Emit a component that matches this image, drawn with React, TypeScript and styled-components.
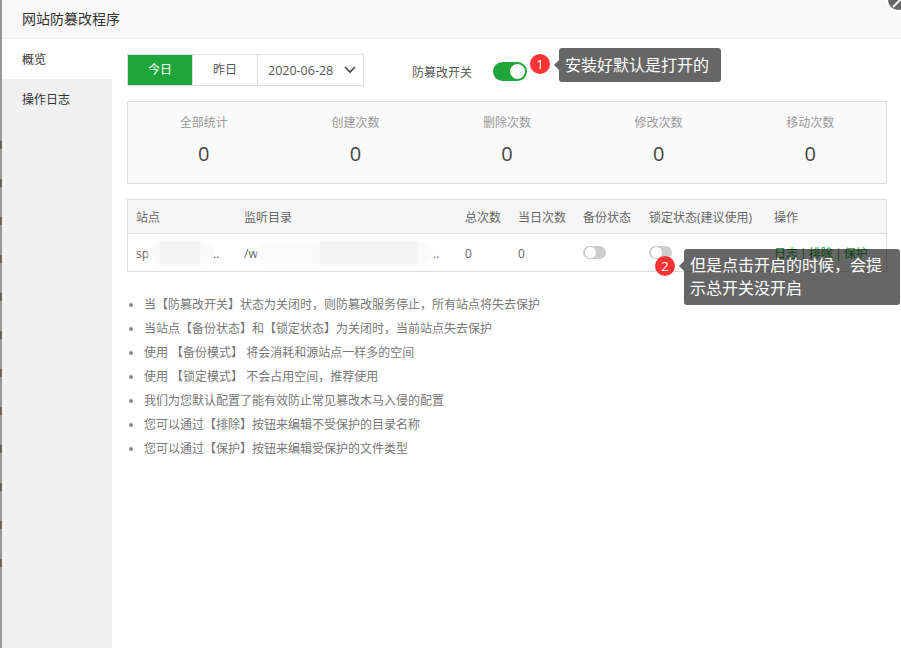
import React from 'react';
import styled, { createGlobalStyle } from 'styled-components';

const GlobalStyle = createGlobalStyle`
  html, body {
    margin: 0;
    padding: 0;
    height: 100%;
    overflow: hidden;
    background: #fff;
  }

  body {
    font-family: "Open Sans", "Noto Sans CJK SC", sans-serif;
    font-size: 12px;
    color: #666;
  }

  #root {
    height: 100%;
  }
`;

const Page = styled.div`
  position: relative;
  display: flex;
  width: 901px;
  height: 648px;
  overflow: hidden;
`;

const Backdrop = styled.div`
  flex: 0 0 2px;
  background:
    repeating-linear-gradient(#999 0 30px, #6d6459 30px 38px) 0 111px / 2px 462px no-repeat,
    #999;
`;

const Dialog = styled.div`
  flex: 1;
  display: flex;
  flex-direction: column;
  background: #fff;
`;

const Title = styled.div`
  flex: 0 0 38px;
  padding-left: 20px;
  line-height: 37px;
  font-size: 14px;
  color: #333;
  background: #f8f8f8;
  border-bottom: 1px solid #eee;
`;

const Close = styled.div`
  position: absolute;
  top: -12px;
  right: -9px;
  width: 20px;
  height: 20px;
  border-radius: 50%;
  background: #666;
  border: 2px solid #fff;

  & svg {
    display: block;
  }
`;

const Body = styled.div`
  flex: 1;
  display: flex;
`;

const Sidebar = styled.div`
  flex: 0 0 110px;
  background: #f0f0f0;
`;

const Tab = styled.div<{ $active?: boolean }>`
  height: 40px;
  line-height: 42px;
  padding-left: 20px;
  color: #333;
  background: ${(props) => (props.$active ? '#fff' : 'transparent')};
`;

const Content = styled.div`
  flex: 1;
  padding: 15px 14px 0 15px;
`;

const Toolbar = styled.div`
  display: flex;
  align-items: center;
  height: 32px;
`;

const DayGroup = styled.div`
  display: flex;
  height: 32px;
  box-sizing: border-box;
  border: 1px solid #ddd;
`;

const DayButton = styled.div<{ $active?: boolean }>`
  width: 64px;
  line-height: 30px;
  text-align: center;
  color: ${(props) => (props.$active ? '#fff' : '#555')};
  background: ${(props) => (props.$active ? '#20a53a' : '#fff')};
  border-right: 1px solid #ddd;
`;

const DateSelect = styled.div`
  width: 105px;
  display: flex;
  align-items: center;
  justify-content: space-between;
  box-sizing: border-box;
  padding: 0 7px 0 10px;
  font-size: 12.5px;
  color: #555;
`;

const SwitchLabel = styled.span`
  margin: 4px 0 0 48px;
  color: #555;
`;

const BigSwitch = styled.div`
  position: relative;
  width: 34px;
  height: 19px;
  margin: 2px 0 0 21px;
  border-radius: 10px;
  background: #20a53a;

  &::after {
    content: "";
    position: absolute;
    top: 2px;
    right: 2px;
    width: 15px;
    height: 15px;
    border-radius: 50%;
    background: #f8f8f8;
  }
`;

const StatBox = styled.div`
  display: grid;
  grid-template-columns: repeat(5, 1fr);
  height: 83px;
  box-sizing: border-box;
  margin-top: 15px;
  background: #fafafa;
  border: 1px solid #ddd;
`;

const Stat = styled.div`
  display: flex;
  flex-direction: column;
  align-items: center;
  padding-top: 11px;
`;

const StatLabel = styled.div`
  line-height: 20px;
  color: #999;
`;

const StatValue = styled.div`
  margin-top: 6px;
  line-height: 30px;
  font-size: 20px;
  color: #444;
`;

const Table = styled.div`
  margin-top: 15px;
  box-sizing: border-box;
  height: 73px;
  border: 1px solid #ddd;
`;

const Row = styled.div`
  display: grid;
  grid-template-columns: 108px 221px 53px 65px 66px 125px 120px;
  align-items: center;
  height: 38px;
`;

const HeadRow = styled(Row)`
  height: 33px;
  background: #f6f6f6;
  border-bottom: 1px solid #ddd;
`;

const Cell = styled.div`
  position: relative;
  padding-left: 8px;
  white-space: nowrap;
  color: #666;
`;

const Redaction = styled.span<{ $width: number; $left: number; $from: number; $to: number }>`
  position: absolute;
  top: 50%;
  left: ${(props) => props.$left}px;
  width: ${(props) => props.$width}px;
  height: 24px;
  transform: translateY(-50%);
  border-radius: 12px;
  background: linear-gradient(
    90deg,
    #fbfbfb ${(props) => props.$from}%,
    #f4f4f4 ${(props) => props.$from}% ${(props) => props.$to}%,
    #fbfbfb ${(props) => props.$to}%
  );
  filter: blur(1px);
`;

const Dots = styled.span<{ $left: number }>`
  position: absolute;
  top: 0;
  left: ${(props) => props.$left}px;
`;

const SmallSwitch = styled.div`
  position: relative;
  width: 23px;
  height: 13px;
  margin-top: -2px;
  border-radius: 7px;
  background: #ccc;

  &::after {
    content: "";
    position: absolute;
    top: 1px;
    left: 2px;
    width: 11px;
    height: 11px;
    border-radius: 50%;
    background: #fff;
  }
`;

const Actions = styled.div`
  padding-left: 8px;
  margin-top: -1px;
  white-space: nowrap;
  word-spacing: -1px;
  color: #20a53a;
`;

const Notes = styled.ul`
  margin: 21px 0 0;
  padding: 0 0 0 17px;
  color: #777;
`;

const Note = styled.li`
  height: 24px;
  line-height: 24px;

  &::marker {
    color: #888;
  }
`;

const Badge = styled.div<{ $x: number; $y: number }>`
  position: absolute;
  left: ${(props) => props.$x}px;
  top: ${(props) => props.$y}px;
  width: 20px;
  height: 20px;
  border-radius: 50%;
  background: #ff3333;
  color: #fff;
  font-size: 13px;
  line-height: 20px;
  text-align: center;
`;

const Tip = styled.div<{ $x: number; $y: number; $width: number; $lineHeight: number }>`
  position: absolute;
  left: ${(props) => props.$x}px;
  top: ${(props) => props.$y}px;
  width: ${(props) => props.$width}px;
  box-sizing: border-box;
  padding: 5px 6px;
  border-radius: 3px;
  background: rgba(0, 0, 0, 0.6);
  color: #fff;
  font-size: 16px;
  line-height: ${(props) => props.$lineHeight}px;

  &::before {
    content: "";
    position: absolute;
    top: 12px;
    left: -5px;
    border-style: solid;
    border-width: 5px 5px 5px 0;
    border-color: transparent rgba(0, 0, 0, 0.6) transparent transparent;
  }
`;

const stats = ['全部统计', '创建次数', '删除次数', '修改次数', '移动次数'];

const heads = ['站点', '监听目录', '总次数', '当日次数', '备份状态', '锁定状态(建议使用)', '操作'];

const notes = [
  '当【防篡改开关】状态为关闭时，则防篡改服务停止，所有站点将失去保护',
  '当站点【备份状态】和【锁定状态】为关闭时，当前站点失去保护',
  '使用 【备份模式】 将会消耗和源站点一样多的空间',
  '使用 【锁定模式】 不会占用空间，推荐使用',
  '我们为您默认配置了能有效防止常见篡改木马入侵的配置',
  '您可以通过【排除】按钮来编辑不受保护的目录名称',
  '您可以通过【保护】按钮来编辑受保护的文件类型',
];

const App = () => (
  <>
    <GlobalStyle />
    <Page>
      <Backdrop />
      <Dialog>
        <Title>网站防篡改程序</Title>
        <Body>
          <Sidebar>
            <Tab $active={true}>概览</Tab>
            <Tab>操作日志</Tab>
          </Sidebar>
          <Content>
            <Toolbar>
              <DayGroup>
                <DayButton $active={true}>今日</DayButton>
                <DayButton>昨日</DayButton>
                <DateSelect>
                  2020-06-28
                  <svg width="12" height="8" viewBox="0 0 12 8" fill="none" stroke="#444" strokeWidth="1.6">
                    <path d="M1 1l5 5 5-5" />
                  </svg>
                </DateSelect>
              </DayGroup>
              <SwitchLabel>防篡改开关</SwitchLabel>
              <BigSwitch />
            </Toolbar>
            <StatBox>
              {stats.map((label) => (
                <Stat key={label}>
                  <StatLabel>{label}</StatLabel>
                  <StatValue>0</StatValue>
                </Stat>
              ))}
            </StatBox>
            <Table>
              <HeadRow>
                {heads.map((head) => (
                  <Cell key={head}>{head}</Cell>
                ))}
              </HeadRow>
              <Row>
                <Cell>
                  sp
                  <Redaction $left={20} $width={67} $from={18} $to={78} />
                  <Dots $left={85}>..</Dots>
                </Cell>
                <Cell>
                  /w
                  <Redaction $left={21} $width={176} $from={36} $to={92} />
                  <Dots $left={197}>..</Dots>
                </Cell>
                <Cell>0</Cell>
                <Cell>0</Cell>
                <Cell><SmallSwitch /></Cell>
                <Cell><SmallSwitch /></Cell>
                <Actions>日志 | 排除 | 保护</Actions>
              </Row>
            </Table>
            <Notes>
              {notes.map((note) => (
                <Note key={note}>{note}</Note>
              ))}
            </Notes>
          </Content>
        </Body>
      </Dialog>
      <Close>
        <svg width="20" height="20" viewBox="0 0 20 20" fill="none" stroke="#fff" strokeWidth="2">
          <path d="M5 17L14 8" />
        </svg>
      </Close>
      <Badge $x={530} $y={54}>1</Badge>
      <Tip $x={559} $y={48} $width={162} $lineHeight={24}>安装好默认是打开的</Tip>
      <Badge $x={655} $y={256}>2</Badge>
      <Tip $x={684} $y={249} $width={216} $lineHeight={23}>但是点击开启的时候，会提示总开关没开启</Tip>
    </Page>
  </>
);

export default App;
